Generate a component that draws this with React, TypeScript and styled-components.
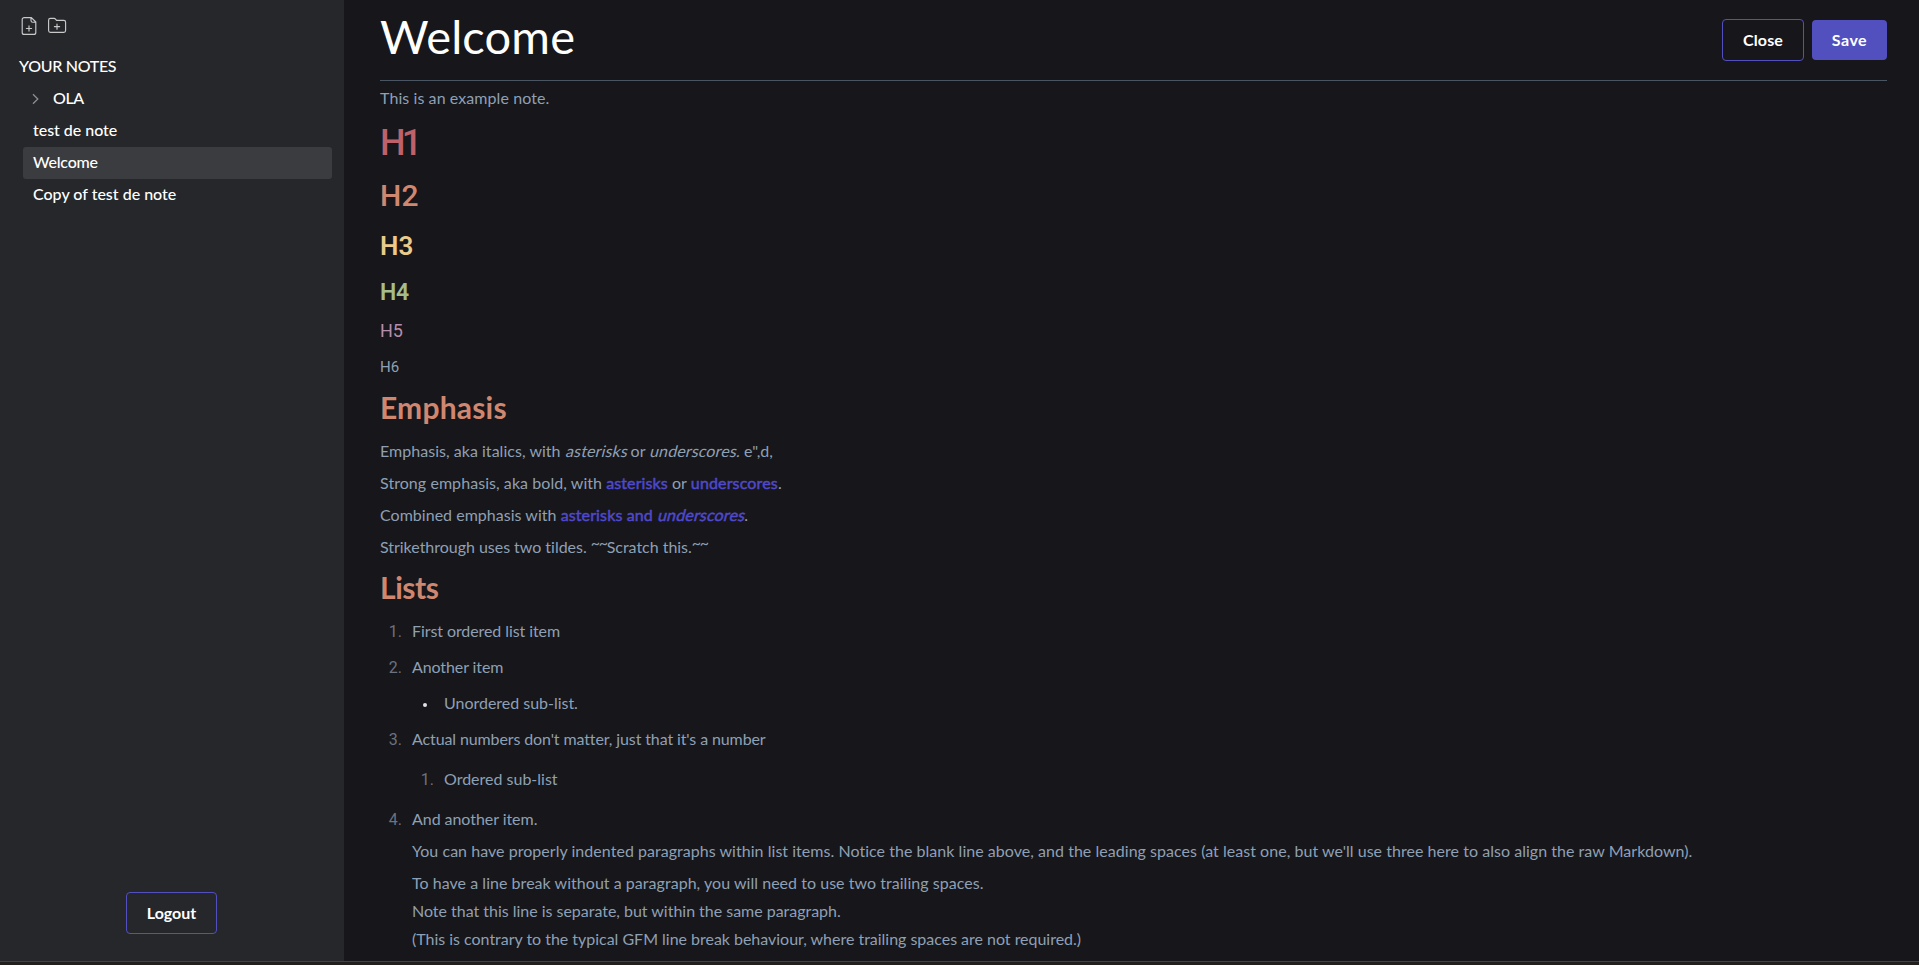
import React from 'react';
import styled, { createGlobalStyle, css } from 'styled-components';

const GlobalStyle = createGlobalStyle`
  * { box-sizing: border-box; }
  body {
    margin: 0;
    background: #17161a;
    color: #fff;
    font-family: Lato, "Liberation Sans", sans-serif;
    font-size: 16px;
    overflow: hidden;
  }
`;

type Tracked = { $track?: number };
const tracking = css<Tracked>`
  letter-spacing: ${({ $track = 0 }) => $track}px;
`;

const Page = styled.div`
  display: flex;
  flex-direction: column;
  height: 965px;
`;

const Workspace = styled.div`
  display: flex;
  flex: 1;
  min-height: 0;
`;

const BottomEdge = styled.footer`
  height: 4px;
  background: #231f1d;
  border-top: 1px solid #434142;
`;

const Sidebar = styled.aside`
  display: flex;
  flex-direction: column;
  width: 344px;
  padding: 15px 12px 27px 19px;
  background: #26272b;
`;

const Toolbar = styled.div`
  display: flex;
  gap: 6px;
  height: 36px;
`;

const ToolIcon = styled.svg`
  width: 22px;
  height: 22px;
  fill: none;
  stroke: #c9c9ca;
  stroke-width: 1.15;
  stroke-linecap: round;
  stroke-linejoin: round;
`;

const SidebarTitle = styled.div<Tracked>`
  height: 32px;
  line-height: 30px;
  font-weight: 500;
  ${tracking}
`;

const NoteList = styled.nav`
  display: flex;
  flex-direction: column;
  flex: 1;
  padding-left: 4px;
`;

const NoteItem = styled.div<Tracked & { $active?: boolean }>`
  display: flex;
  align-items: center;
  height: 32px;
  padding: 0 10px 3px;
  border-radius: 3px;
  font-weight: 500;
  background: ${({ $active }) => ($active ? '#3b3c40' : 'transparent')};
  ${tracking}
`;

const Chevron = styled.svg`
  width: 7px;
  height: 12px;
  margin: 3px 14px 0 -1px;
  fill: none;
  stroke: #8d8e91;
  stroke-width: 1.3;
`;

const Button = styled.button<Tracked & { $primary?: boolean; $width: number }>`
  width: ${({ $width }) => $width}px;
  height: ${({ $primary }) => ($primary ? 40 : 42)}px;
  padding: 0 0 2px;
  border: ${({ $primary }) => ($primary ? 'none' : '1px solid #524fbf')};
  border-radius: 4px;
  background: ${({ $primary }) => ($primary ? '#524fbf' : 'transparent')};
  color: #fff;
  font: 700 16px Lato, "Liberation Sans", sans-serif;
  ${tracking}
`;

const SidebarFooter = styled.div`
  display: flex;
  justify-content: center;
  padding-right: 8px;
`;

const Main = styled.main`
  flex: 1;
  padding: 0 32px 0 36px;
`;

const Header = styled.header`
  display: flex;
  justify-content: space-between;
  height: 81px;
  margin-bottom: 3px;
  border-bottom: 1px solid #4a5563;
`;

const Title = styled.h1<Tracked>`
  margin: 0;
  font-size: 47px;
  font-weight: 400;
  line-height: 72px;
  ${tracking}
`;

const Actions = styled.div`
  display: flex;
  align-items: center;
  gap: 8px;
`;

const levels = {
  1: { size: 36, height: 62, color: '#bf616a', weight: 500, track: -3.7 },
  2: { size: 30, height: 44, color: '#d08770', weight: 500, track: 0.3 },
  3: { size: 26, height: 56, color: '#ebcb8b', weight: 600, track: 0 },
  4: { size: 23, height: 38, color: '#a3be8c', weight: 600, track: -0.4 },
  5: { size: 18, height: 38, color: '#b48ead', weight: 400, track: 0 },
  6: { size: 15, height: 35, color: '#8ea0b5', weight: 400, track: 0.1 },
};

const Heading = styled.div<{ $level: keyof typeof levels }>`
  ${({ $level }) => {
    const l = levels[$level];
    return css`
      height: ${l.height}px;
      line-height: ${l.height}px;
      font-size: ${l.size}px;
      font-weight: ${l.weight};
      color: ${l.color};
      letter-spacing: ${l.track}px;
    `;
  }}
  font-family: Roboto, sans-serif;
`;

const SectionTitle = styled.h2<Tracked>`
  height: 44px;
  margin: 0 0 8px;
  font-size: 30px;
  font-weight: 700;
  line-height: 44px;
  color: #d08770;
  ${tracking}
`;

const Paragraph = styled.p<Tracked>`
  margin: 0 0 4px;
  line-height: 28px;
  color: #8ea0b5;
  white-space: nowrap;
  ${tracking}
`;

const FirstParagraph = styled(Paragraph)`
  margin-bottom: 0;
`;

const Line = styled.span<Tracked>`
  display: block;
  ${tracking}
`;

/* Slants the upright face so that emphasised words keep its letter shapes. */
const Em = styled.em<Tracked>`
  display: inline-block;
  font-style: normal;
  transform: skewX(-14deg);
  transform-origin: 0 72%;
  ${tracking}
`;

const Strong = styled.strong<Tracked>`
  color: #4f49cb;
  font-weight: 400;
  -webkit-text-stroke: 0.5px #4f49cb;
  ${tracking}
`;

const Tildes = styled.span`
  display: inline-block;
  width: 16px;
  line-height: 1;
  letter-spacing: -1.3px;
  vertical-align: 4px;
`;

const List = styled.ol<{ $before?: number; $after?: number }>`
  margin: ${({ $before = 0 }) => $before}px 0 ${({ $after = 0 }) => $after}px;
  padding: 0;
  list-style: none;
`;

const Item = styled.li`
  display: grid;
  grid-template-columns: 22px 1fr;
  column-gap: 10px;
  margin-bottom: 8px;

  &:last-child,
  ${Paragraph}:last-child {
    margin-bottom: 0;
  }
`;

const Marker = styled.span`
  height: 28px;
  font-family: Roboto, sans-serif;
  line-height: 30px;
  text-align: right;
  color: #6b7280;
`;

const Bullet = styled.span`
  width: 4px;
  height: 4px;
  margin: 14px 0 0 10.5px;
  border-radius: 50%;
  background: #dfe2e6;
`;

const Body = styled.div`
  min-width: 0;
`;

export default function App() {
  return (
    <Page>
      <GlobalStyle />
      <Workspace>
        <Sidebar>
          <Toolbar>
            <ToolIcon viewBox="0 0 22 22">
              <path d="M12.4 2.6H5.2a2 2 0 0 0-2 2v12.8a2 2 0 0 0 2 2h9.6a2 2 0 0 0 2-2V7zM12 2.8V5.4a1.8 1.8 0 0 0 1.8 1.8h2.8M10 10.9v5.2M7.4 13.5h5.2" />
            </ToolIcon>
            <ToolIcon viewBox="0 0 22 22">
              <path d="M1.6 15.6V5.2a1.8 1.8 0 0 1 1.8-1.8h3.7a1.8 1.8 0 0 1 1.4.7l1 1.3h7.3a1.8 1.8 0 0 1 1.8 1.8v8.4a1.8 1.8 0 0 1-1.8 1.8H3.4a1.8 1.8 0 0 1-1.8-1.8zM10 9v5.2M7.4 11.6h5.2" />
            </ToolIcon>
          </Toolbar>
          <SidebarTitle $track={-0.3}>YOUR NOTES</SidebarTitle>
          <NoteList>
            <NoteItem $track={-0.4}>
              <Chevron viewBox="0 0 7 12">
                <path d="M1 1.2 5.8 6 1 10.8" />
              </Chevron>
              OLA
            </NoteItem>
            <NoteItem $track={-0.03}>test de note</NoteItem>
            <NoteItem $active $track={-0.22}>Welcome</NoteItem>
            <NoteItem>Copy of test de note</NoteItem>
          </NoteList>
          <SidebarFooter>
            <Button $width={91} $track={0}>Logout</Button>
          </SidebarFooter>
        </Sidebar>
        <Main>
          <Header>
            <Title $track={0.15}>Welcome</Title>
            <Actions>
              <Button $width={82} $track={0.1}>Close</Button>
              <Button $width={75} $primary $track={0.5}>Save</Button>
            </Actions>
          </Header>
          <FirstParagraph $track={0.08}>This is an example note.</FirstParagraph>
          <Heading $level={1}>H1</Heading>
          <Heading $level={2}>H2</Heading>
          <Heading $level={3}>H3</Heading>
          <Heading $level={4}>H4</Heading>
          <Heading $level={5}>H5</Heading>
          <Heading $level={6}>H6</Heading>
          <SectionTitle $track={0.2}>Emphasis</SectionTitle>
          <Paragraph $track={0.03}>
            Emphasis, aka italics, with <Em $track={0.12}>asterisks</Em> or{' '}
            <Em $track={0.12}>underscores.</Em> e",d,
          </Paragraph>
          <Paragraph $track={0.06}>
            Strong emphasis, aka bold, with <Strong $track={0.1}>asterisks</Strong> or{' '}
            <Strong $track={0.15}>underscores</Strong>.
          </Paragraph>
          <Paragraph $track={0.025}>
            Combined emphasis with{' '}
            <Strong $track={0.12}>
              asterisks and <Em $track={0.15}>underscores</Em>
            </Strong>
            .
          </Paragraph>
          <Paragraph $track={-0.026}>
            Strikethrough uses two tildes. <Tildes>~~</Tildes>Scratch this.<Tildes>~~</Tildes>
          </Paragraph>
          <SectionTitle $track={-0.45}>Lists</SectionTitle>
          <List>
            <Item>
              <Marker>1.</Marker>
              <Paragraph $track={-0.08}>First ordered list item</Paragraph>
            </Item>
            <Item>
              <Marker>2.</Marker>
              <Body>
                <Paragraph $track={-0.1}>Another item</Paragraph>
                <List as="ul" $before={8}>
                  <Item>
                    <Bullet />
                    <Paragraph $track={-0.02}>Unordered sub-list.</Paragraph>
                  </Item>
                </List>
              </Body>
            </Item>
            <Item>
              <Marker>3.</Marker>
              <Body>
                <Paragraph $track={-0.115}>Actual numbers don't matter, just that it's a number</Paragraph>
                <List $before={12} $after={4}>
                  <Item>
                    <Marker>1.</Marker>
                    <Paragraph>Ordered sub-list</Paragraph>
                  </Item>
                </List>
              </Body>
            </Item>
            <Item>
              <Marker>4.</Marker>
              <Body>
                <Paragraph $track={-0.05}>And another item.</Paragraph>
                <Paragraph $track={0.035}>
                  You can have properly indented paragraphs within list items. Notice the blank line above, and the
                  leading spaces (at least one, but we'll use three here to also align the raw Markdown).
                </Paragraph>
                <Paragraph>
                  <Line $track={0.035}>
                    To have a line break without a paragraph, you will need to use two trailing spaces.
                  </Line>
                  <Line $track={-0.02}>Note that this line is separate, but within the same paragraph.</Line>
                  <Line $track={-0.02}>
                    (This is contrary to the typical GFM line break behaviour, where trailing spaces are not required.)
                  </Line>
                </Paragraph>
              </Body>
            </Item>
          </List>
        </Main>
      </Workspace>
      <BottomEdge />
    </Page>
  );
}
